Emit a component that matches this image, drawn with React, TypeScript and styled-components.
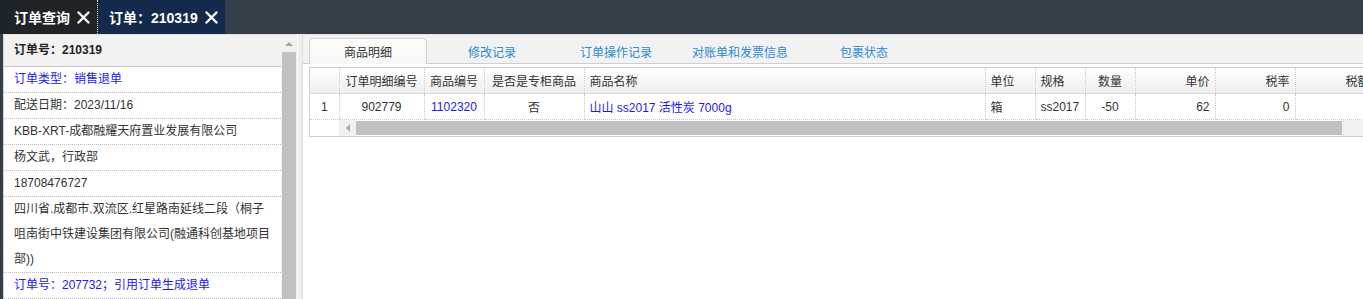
import React from 'react';
import styled, { createGlobalStyle } from 'styled-components';

const GlobalStyle = createGlobalStyle`
  html, body {
    margin: 0;
    padding: 0;
    background: #ffffff;
  }
  body {
    font-family: "Liberation Sans", "Noto Sans CJK SC", sans-serif;
    font-size: 12px;
    color: #333;
  }
`;

const Page = styled.div`
  width: 1363px;
  height: 299px;
  overflow: hidden;
  display: flex;
  flex-direction: column;
`;

const TopBar = styled.div`
  height: 34px;
  display: flex;
  background: #343e48;
  flex-shrink: 0;
`;

const TopTab = styled.div<{ $active?: boolean }>`
  display: flex;
  align-items: center;
  gap: 7px;
  padding: 0 7px 0 ${(p) => (p.$active ? '11px' : '14px')};
  background: ${(p) => (p.$active ? '#142a4c' : '#1f2429')};
  color: #fff;
  font-size: 14px;
  font-weight: bold;
  border-right: ${(p) => (p.$active ? 'none' : '1px dotted #ddd')};
`;

const CloseIcon = () => (
  <svg width="13" height="13" viewBox="0 0 13 13">
    <path d="M1.5 1.5 L11.5 11.5 M11.5 1.5 L1.5 11.5" stroke="#fff" strokeWidth="2.4" strokeLinecap="round" />
  </svg>
);

const Main = styled.div`
  flex: 1;
  display: flex;
  border-left: 3px solid #343e48;
  background: #fff;
  min-height: 0;
`;

const SidePanel = styled.div`
  width: 294px;
  display: flex;
  flex-shrink: 0;
  border-top: 1px solid #e2e2e2;
`;

const InfoList = styled.div`
  flex: 1;
  border-left: 1px solid #d4d4d4;
`;

const InfoTitle = styled.div`
  height: 31px;
  line-height: 31px;
  padding-left: 10px;
  background: #f2f2f2;
  border-bottom: 1px solid #c8c8c8;
  font-weight: bold;
  color: #222;
`;

const InfoRow = styled.div<{ $blue?: boolean }>`
  line-height: 25px;
  padding: 0 6px 0 10px;
  border-bottom: 1px dotted #bbb;
  color: ${(p) => (p.$blue ? '#1a1aee' : '#333')};
`;

const VScroll = styled.div`
  width: 16px;
  display: flex;
  flex-direction: column;
  background: #f1f1f1;
`;

const ScrollArrowUp = styled.div`
  height: 17px;
  display: flex;
  align-items: center;
  justify-content: center;
  &::before {
    content: '';
    border-left: 4px solid transparent;
    border-right: 4px solid transparent;
    border-bottom: 4px solid #a3a3a3;
  }
`;

const VThumb = styled.div`
  flex: 1;
  margin: 0 1px;
  background: #c1c1c1;
`;

const Splitter = styled.div`
  width: 6px;
  flex-shrink: 0;
  background: #efefef;
  border-left: 1px solid #fafafa;
  border-right: 1px solid #dedede;
  box-sizing: border-box;
`;

const ContentPanel = styled.div`
  flex: 1;
  display: flex;
  flex-direction: column;
  min-width: 0;
  overflow: hidden;
`;

const TabStrip = styled.div`
  height: 28px;
  display: flex;
  align-items: flex-end;
  gap: 6px;
  padding-left: 6px;
  background: #f2f2f2;
  border-top: 1px solid #e2e2e2;
  border-bottom: 1px solid #cfcfcf;
  flex-shrink: 0;
`;

const ContentTab = styled.div<{ $active?: boolean }>`
  width: 118px;
  height: 26px;
  box-sizing: border-box;
  display: flex;
  align-items: center;
  justify-content: center;
  color: ${(p) => (p.$active ? '#333' : '#2a8bd1')};
  background: ${(p) => (p.$active ? 'linear-gradient(#fdfdfd, #f6f6f6)' : 'transparent')};
  border: 1px solid ${(p) => (p.$active ? '#cfcfcf' : 'transparent')};
  border-bottom: none;
  border-radius: 5px 5px 0 0;
  margin-bottom: -1px;
  padding-bottom: 1px;
`;

const GridWrap = styled.div`
  margin: 3px 0 0 6px;
  border: 1px solid #cfcfcf;
  border-right: none;
  width: 1200px;
`;

const Grid = styled.table`
  border-collapse: collapse;
  table-layout: fixed;
  width: 1065px;
  & td, & th {
    height: 25px;
    padding: 0 5px;
    white-space: nowrap;
    overflow: hidden;
    border-right: 1px dotted #c4c4c4;
    font-weight: normal;
    font-size: 12px;
  }
`;

const HeadRow = styled.tr`
  background: linear-gradient(#ffffff, #ededed);
  & th {
    border-bottom: 1px solid #dadada;
    color: #333;
  }
`;

const BodyRow = styled.tr`
  & td {
    border-bottom: 1px dotted #c4c4c4;
    color: #333;
  }
`;

const Cell = styled.td<{ $align?: string; $blue?: boolean }>`
  text-align: ${(p) => p.$align || 'left'};
  && {
    color: ${(p) => (p.$blue ? '#1a1aee' : '#333')};
  }
`;

const HeadCell = styled.th<{ $align?: string }>`
  text-align: ${(p) => p.$align || 'left'};
`;

const HScroll = styled.div`
  height: 16px;
  display: flex;
`;

const HScrollLead = styled.div`
  width: 29px;
  background: #fff;
`;

const ScrollArrowLeft = styled.div`
  width: 17px;
  background: #f1f1f1;
  display: flex;
  align-items: center;
  justify-content: center;
  &::before {
    content: '';
    border-top: 4px solid transparent;
    border-bottom: 4px solid transparent;
    border-right: 4px solid #a3a3a3;
  }
`;

const HThumb = styled.div`
  width: 986px;
  margin: 1px 0;
  background: #c1c1c1;
`;

const HTrack = styled.div`
  flex: 1;
  background: #f1f1f1;
`;

const columns = [
  { title: '', width: 29, align: 'center' },
  { title: '订单明细编号', width: 85, align: 'center' },
  { title: '商品编号', width: 60, align: 'center' },
  { title: '是否是专柜商品', width: 100, align: 'center' },
  { title: '商品名称', width: 401, align: 'left' },
  { title: '单位', width: 50, align: 'left' },
  { title: '规格', width: 50, align: 'left' },
  { title: '数量', width: 50, align: 'center' },
  { title: '单价', width: 80, align: 'right' },
  { title: '税率', width: 80, align: 'right' },
  { title: '税额', width: 80, align: 'right' },
];

const row = [
  { v: '1' },
  { v: '902779' },
  { v: '1102320', blue: true },
  { v: '否' },
  { v: '山山 ss2017 活性炭 7000g', blue: true },
  { v: '箱' },
  { v: 'ss2017' },
  { v: '-50' },
  { v: '62' },
  { v: '0' },
  { v: '' },
];

const tabs = ['商品明细', '修改记录', '订单操作记录', '对账单和发票信息', '包裹状态'];

export default function App() {
  return (
    <Page>
      <GlobalStyle />
      <TopBar>
        <TopTab>
          订单查询
          <CloseIcon />
        </TopTab>
        <TopTab $active>
          订单：210319
          <CloseIcon />
        </TopTab>
      </TopBar>
      <Main>
        <SidePanel>
          <InfoList>
            <InfoTitle>订单号：210319</InfoTitle>
            <InfoRow $blue>订单类型：销售退单</InfoRow>
            <InfoRow>配送日期：2023/11/16</InfoRow>
            <InfoRow>KBB-XRT-成都融耀天府置业发展有限公司</InfoRow>
            <InfoRow>杨文武，行政部</InfoRow>
            <InfoRow>18708476727</InfoRow>
            <InfoRow>
              四川省.成都市.双流区.红星路南延线二段（桐子咀南街中铁建设集团有限公司(融通科创基地项目部))
            </InfoRow>
            <InfoRow $blue>订单号：207732；引用订单生成退单</InfoRow>
          </InfoList>
          <VScroll>
            <ScrollArrowUp />
            <VThumb />
          </VScroll>
        </SidePanel>
        <Splitter />
        <ContentPanel>
          <TabStrip>
            {tabs.map((t, i) => (
              <ContentTab key={t} $active={i === 0}>
                {t}
              </ContentTab>
            ))}
          </TabStrip>
          <GridWrap>
            <Grid>
              <colgroup>
                {columns.map((c, i) => (
                  <col key={i} style={{ width: c.width }} />
                ))}
              </colgroup>
              <thead>
                <HeadRow>
                  {columns.map((c, i) => (
                    <HeadCell key={i} $align={c.align}>
                      {c.title}
                    </HeadCell>
                  ))}
                </HeadRow>
              </thead>
              <tbody>
                <BodyRow>
                  {row.map((r, i) => (
                    <Cell key={i} $align={columns[i].align} $blue={r.blue}>
                      {r.v}
                    </Cell>
                  ))}
                </BodyRow>
              </tbody>
            </Grid>
            <HScroll>
              <HScrollLead />
              <ScrollArrowLeft />
              <HThumb />
              <HTrack />
            </HScroll>
          </GridWrap>
        </ContentPanel>
      </Main>
    </Page>
  );
}
